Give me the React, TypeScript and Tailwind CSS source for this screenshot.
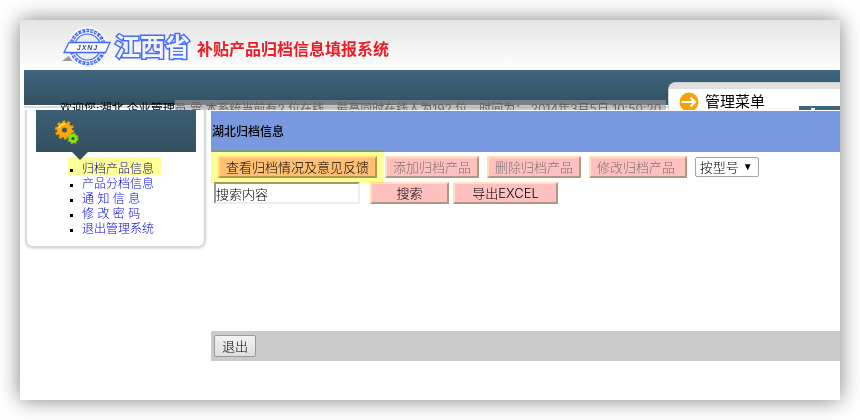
import type { ButtonHTMLAttributes } from "react";

const menuItems = ["归档产品信息", "产品分档信息", "通 知 信 息", "修 改 密 码", "退出管理系统"];

function Emblem() {
  return (
    <svg viewBox="0 0 50 42" className="h-[42px] w-[50px] shrink-0" aria-label="JXNJ">
      <path d="M1 35 L9 29 L14 34 C22 39 32 38 43 33 C37 41 18 41 11 35 Z" fill="#9b9b9b" />
      <circle cx="26.500" cy="21" r="16" fill="none" stroke="#f6f7ff" strokeWidth="9" />
      <circle cx="26.500" cy="21" r="16.500" fill="none" stroke="#4169f5" strokeWidth="3.500" strokeDasharray="3 1" />
      <circle cx="26.500" cy="21" r="16.500" fill="none" stroke="#dfe6ff" strokeWidth="1" strokeDasharray="3 2" />
      <circle cx="26.500" cy="21" r="13" fill="#ececf2" stroke="#4169f5" strokeWidth="1.200" />
      <path d="M8 16.500 H49 L44.500 26.500 H3 Z" fill="#fff" stroke="#4169f5" strokeWidth="1.300" />
      <text x="26.500" y="24" textAnchor="middle" fontFamily="Liberation Sans, sans-serif" fontSize="7" fontStyle="italic" fontWeight="bold" letterSpacing="1" fill="#33449a">
        JXNJ
      </text>
    </svg>
  );
}

function Gears() {
  return (
    <svg viewBox="0 0 24 24" className="size-6" aria-hidden="true">
      <circle cx="9.500" cy="10" r="7.500" fill="none" stroke="#f59a00" strokeWidth="4" strokeDasharray="2.800 1.912" />
      <circle cx="9.500" cy="10" r="5" fill="none" stroke="#ffa800" strokeWidth="5" />
      <path d="M4 8 A6 6 0 0 1 10 4" fill="none" stroke="#ffd83a" strokeWidth="2" />
      <circle cx="18" cy="18.500" r="4.500" fill="none" stroke="#6fbe12" strokeWidth="2.500" strokeDasharray="2 1.534" />
      <circle cx="18" cy="18.500" r="3" fill="none" stroke="#8cdc1a" strokeWidth="3" />
      <circle cx="18" cy="18.500" r="1.300" fill="#2f6410" />
    </svg>
  );
}

function PinkButton({ className = "", ...rest }: ButtonHTMLAttributes<HTMLButtonElement>) {
  return (
    <button
      type="button"
      className={`h-[22px] whitespace-pre border-2 border-t-[#ffdfbf] border-r-[#b09880] border-b-[#b09880] border-l-[#ffdfbf] bg-[#ffc0c0] px-1.5 leading-[18px] disabled:text-[#7a7070] ${className}`}
      {...rest}
    />
  );
}

function Banner() {
  return (
    <header>
      <div className="flex h-[50px] items-center bg-linear-to-b from-[#e4e4e4] to-white pt-1 pl-[41px]">
        <Emblem />
        <h1 className="flex items-center whitespace-nowrap font-bold">
          <span className="ml-1 text-[25px] leading-8 text-[#f2f4fb] [-webkit-text-stroke:3px_#4a6cfa] [paint-order:stroke_fill] [stroke-linejoin:round]">江西省</span>
          <span className="ml-[7px] pt-1 text-base text-[#ee1c25]">补贴产品归档信息填报系统</span>
        </h1>
      </div>
      <div className="relative ml-1 h-10 overflow-hidden">
        <div className="h-[35px] bg-linear-to-b from-[#3d6680] to-[#34505f]" />
        <div className="mt-px h-0.5 bg-[#dcdcdc]" />
        <p className="absolute top-[30px] left-9 whitespace-pre pt-px text-xs leading-4 font-normal text-black">
          欢迎您:湖北 企业管理员 雷 本系统当前有2 位在线，最高同时在线人为192 位，时间为： 2014年3月5日 10:50:20
        </p>
        <div className="absolute top-[30px] right-[174px] left-[151px] h-2.5 bg-[#a6a0a0]/60" />
        <div className="absolute top-3 right-0 h-8 w-[172px] rounded-tl-lg border-t border-l border-[#c8d4cc] bg-white">
          <div className="h-1.5 rounded-tl-lg bg-[#dfdfdf]" />
          <div className="flex items-center pt-0.5 pl-2.5">
            <svg viewBox="0 0 20 20" className="size-5" aria-hidden="true">
              <circle cx="10" cy="10" r="9.500" fill="#f7a20a" />
              <path d="M2.500 10 H15.500 M11.500 5.500 L16 10 L11.500 14.500" fill="none" stroke="#fff" strokeWidth="2.200" />
            </svg>
            <h2 className="ml-1.5 pt-px text-[15px] leading-5 font-normal text-black">管理菜单</h2>
          </div>
          <div className="absolute top-[23px] right-0 flex h-2 w-[41px] bg-[#3d6680] pl-3">
            <span className="mt-0.5 h-2 w-1 bg-white/90" />
          </div>
        </div>
      </div>
    </header>
  );
}

function Sidebar() {
  return (
    <nav className="ml-[5px] h-[138px] w-[181px] shrink-0 rounded-b-lg border-2 border-t-0 border-[#d3ded6] pl-[9px] shadow-sm">
      <div className="relative h-[42px] w-40 bg-linear-to-b from-[#3b5f75] to-[#34505f] pt-2.5 pl-[19px]">
        <Gears />
        <div className="absolute top-full left-9 border-x-8 border-t-8 border-x-transparent border-t-[#34505f]" />
      </div>
      <div className="relative">
        <ul className="pt-[9px] pl-[34px] text-xs leading-[15px]">
          {menuItems.map((item) => (
            <li key={item} className="flex items-center">
              <span className="mt-1 mr-[9px] size-[3px] bg-black" />
              <a href="#" className="text-[#0000ee]">{item}</a>
            </li>
          ))}
        </ul>
        <div className="pointer-events-none absolute top-[5px] left-8 h-[18px] w-[93px] bg-[#ffff99] mix-blend-multiply" />
      </div>
    </nav>
  );
}

function Archive() {
  return (
    <main className="ml-[5px] min-w-0 flex-1 pt-px text-[13px]">
      <h2 className="h-[41px] bg-[#7899e0] pl-px text-xs leading-[41px] font-medium text-black">湖北归档信息</h2>
      <div className="relative">
        <div className="flex gap-2 pt-1 pl-[7px]">
          <PinkButton>查看归档情况及意见反馈</PinkButton>
          <PinkButton disabled>添加归档产品</PinkButton>
          <PinkButton disabled>删除归档产品</PinkButton>
          <PinkButton disabled>{"修改归档产品 "}</PinkButton>
          <div className="relative mt-px h-5">
            <select aria-label="搜索方式" className="h-5 w-16 appearance-none rounded-xs border border-[#a6a6a6] bg-white pl-1 leading-[18px]">
              <option>按型号</option>
            </select>
            <span className="pointer-events-none absolute top-0.5 right-1.5 font-['DejaVu_Sans'] text-[10px] leading-4 text-black">▼</span>
          </div>
        </div>
        <div className="pointer-events-none absolute -top-0.5 left-0 h-[33px] w-[173px] bg-[#ffff99] mix-blend-multiply" />
      </div>
      <div className="flex pt-1 pl-[3px]">
        <input
          aria-label="搜索内容"
          defaultValue="搜索内容"
          className="h-[22px] w-[146px] border-2 border-t-[#999] border-r-[#eee] border-b-[#eee] border-l-[#999] bg-white"
        />
        <PinkButton className="ml-2.5 w-[79px]">搜索</PinkButton>
        <PinkButton className="ml-1 w-[105px]">导出EXCEL</PinkButton>
      </div>
      <footer className="mt-[127px] mb-[39px] flex h-[30px] items-center bg-[#cbcbcb] pl-[3px]">
        <button type="button" className="h-[22px] w-[42px] rounded-xs border border-[#999] bg-linear-to-b from-[#f4f4f4] to-[#dedede] leading-5">
          退出
        </button>
      </footer>
    </main>
  );
}

export default function App() {
  return (
    <div className="flow-root bg-white font-[Inter,'Noto_Sans_CJK_SC',sans-serif] font-light text-black">
      <div className="m-5 bg-white shadow-[0_0_20px_rgba(0,0,0,0.5)]">
        <Banner />
        <div className="flex items-start">
          <Sidebar />
          <Archive />
        </div>
      </div>
    </div>
  );
}
